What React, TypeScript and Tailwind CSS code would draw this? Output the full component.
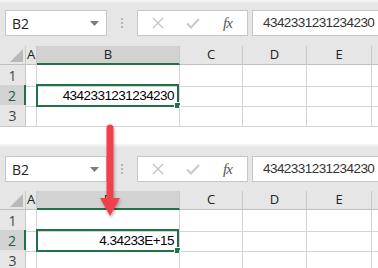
const gridCols = 'grid grid-cols-[26px_11px_143px_63px_64px_65px_1fr]';
const uiFont = "font-['Open_Sans','Noto_Sans',sans-serif]";
const cellFont = "font-['Liberation_Sans',Arial,sans-serif]";

function Toolbar({ formula, topPad }: { formula: string; topPad: string }) {
  return (
    <div className={`${topPad} h-full flex items-start bg-[linear-gradient(#f7f7f7,#e6e6e6_4px)]`}>
      <div className="ml-[5px] w-[102px] h-[26px] bg-white border border-[#c6c6c6] flex items-center justify-between pl-[6px] pr-[7px]">
        <span className={`${uiFont} text-[14px] text-[#222]`}>B2</span>
        <svg width="9" height="5" viewBox="0 0 9 5">
          <path d="M0 0h9L4.5 5z" fill="#7b7b7b" />
        </svg>
      </div>
      <div className="w-[30px] h-[26px] flex flex-col items-center justify-center gap-[2px]">
        <span className="w-[2px] h-[2px] bg-[#b3b3b3]" />
        <span className="w-[2px] h-[2px] bg-[#b3b3b3]" />
        <span className="w-[2px] h-[2px] bg-[#b3b3b3]" />
      </div>
      <div className="w-[111px] h-[26px] bg-white border border-[#c6c6c6] flex items-center">
        <svg width="12" height="12" viewBox="0 0 12 12" className="ml-[14px]">
          <path d="M1 1l10 10M11 1L1 11" stroke="#c4c4c4" strokeWidth="1.3" />
        </svg>
        <svg width="14" height="11" viewBox="0 0 14 11" className="ml-[22px]">
          <path d="M1 5.5l4 4L13 1" stroke="#c9c9c9" strokeWidth="2" fill="none" />
        </svg>
        <span className="ml-[23px] font-['Liberation_Serif',serif] italic text-[15px] text-[#555] tracking-[-1px]">fx</span>
      </div>
      <div className="ml-[4px] flex-1 h-[26px] bg-white border border-[#c6c6c6] border-r-0 flex items-center pl-[10px]">
        <span className={`${cellFont} text-[13.5px] tracking-[-0.55px] text-[#333]`}>{formula}</span>
      </div>
    </div>
  );
}

function HeaderRow() {
  const cell = `h-[19px] flex items-center justify-center border-r border-[#c8c8c8] ${uiFont} text-[13px] text-[#222]`;
  return (
    <div className={`${gridCols} h-[19px] bg-[#e6e6e6]`}>
      <div className="h-[19px] border-r border-[#c8c8c8] border-b border-b-[#bfbfbf] flex items-end justify-end pr-[2px] pb-[2px]">
        <svg width="13" height="13" viewBox="0 0 13 13">
          <path d="M13 0v13H0z" fill="#b9b9b9" />
        </svg>
      </div>
      <div className={`${cell} border-b border-b-[#bfbfbf] justify-start pl-[1px]`}>A</div>
      <div className={`${cell} bg-[#d2d2d2] border-b-2 border-b-[#217346] text-[#1d5b3b] pt-[1px]`}>B</div>
      <div className={`${cell} border-b border-b-[#bfbfbf]`}>C</div>
      <div className={`${cell} border-b border-b-[#bfbfbf]`}>D</div>
      <div className={`${cell} border-b border-b-[#bfbfbf]`}>E</div>
      <div className="h-[19px] border-b border-b-[#bfbfbf]" />
    </div>
  );
}

function Row({ n, value, height }: { n: number; value?: string; height: string }) {
  const selected = value !== undefined;
  const line = 'border-r border-b border-[#d4d4d4]';
  return (
    <div className={`${gridCols} ${height}`}>
      <div
        className={`flex items-center justify-center border-b border-[#c8c8c8] ${uiFont} text-[14px] ${
          selected
            ? 'bg-[#d2d2d2] border-r-2 border-r-[#217346] text-[#1d5b3b]'
            : 'bg-[#e6e6e6] border-r border-r-[#c8c8c8] text-[#444]'
        }`}
      >
        {n}
      </div>
      <div className={line} />
      <div className={`${line} relative`}>
        {selected && (
          <>
            <div className="absolute -left-[1px] -top-[1px] -right-[0px] -bottom-[1px] border-2 border-[#217346] flex items-center justify-end pr-[3px] pt-[1px]">
              <span className={`${cellFont} text-[13.5px] tracking-[-0.55px] text-black`}>{value}</span>
            </div>
            <div className="absolute -right-[2px] -bottom-[3px] w-[5px] h-[5px] bg-[#217346] border border-white box-content" />
          </>
        )}
      </div>
      <div className={line} />
      <div className={line} />
      <div className={line} />
      <div className="border-b border-[#d4d4d4]" />
    </div>
  );
}

function Panel({ value, topPad, toolbarH }: { value: string; topPad: string; toolbarH: string }) {
  return (
    <div className="flex flex-col">
      <div className={toolbarH}>
        <Toolbar formula="4342331231234230" topPad={topPad} />
      </div>
      <HeaderRow />
      <Row n={1} height="h-[20px]" />
      <Row n={2} value={value} height="h-[20px]" />
      <Row n={3} height="h-[18px]" />
    </div>
  );
}

export default function App() {
  return (
    <div className="relative w-[378px] h-[268px] bg-white overflow-hidden">
      <Panel value="4342331231234230" topPad="pt-[10px]" toolbarH="h-[46px]" />
      <div className="h-[21px] bg-white" />
      <Panel value="4.34233E+15" topPad="pt-[12px]" toolbarH="h-[47px]" />
      <svg
        className="absolute left-[96px] top-[121px]"
        width="30"
        height="102"
        viewBox="0 0 30 102"
      >
        <defs>
          <filter id="sh" x="-50%" y="-20%" width="200%" height="140%">
            <feDropShadow dx="1" dy="2" stdDeviation="1.5" floodColor="#000" floodOpacity="0.3" />
          </filter>
        </defs>
        <g filter="url(#sh)">
          <path d="M10.5 7a3.5 3.5 0 0 1 7 0V78h-7z" fill="#f0414b" />
          <path d="M4 77h20L14 95z" fill="#f0414b" />
        </g>
      </svg>
    </div>
  );
}
